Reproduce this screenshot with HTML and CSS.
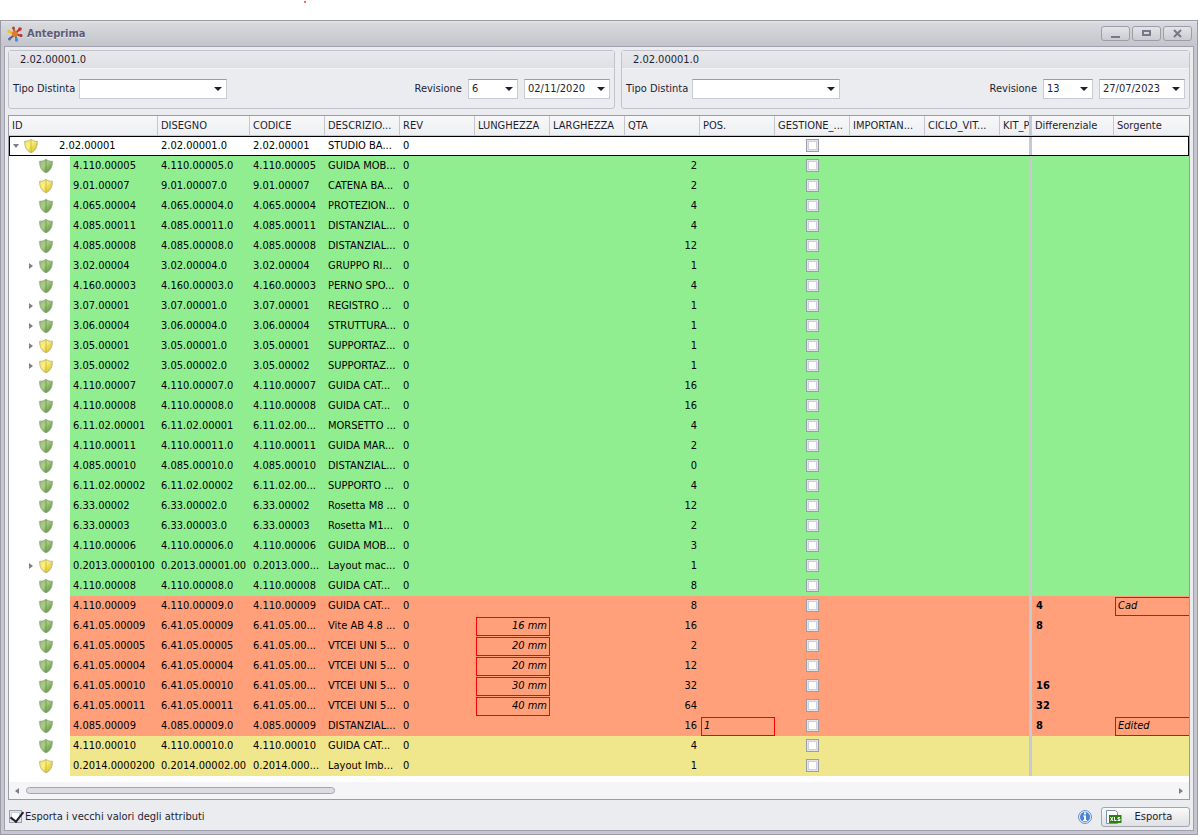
FILE: index.html
```html
<!DOCTYPE html>
<html lang="it">
<head>
    <meta charset="utf-8">
    <meta name="viewport" content="width=device-width, initial-scale=1.0">
    <link rel="stylesheet" href="styles.css">
    <title>Anteprima</title>
</head>
<body>
    <!-- shared icons -->
    <svg class="sprites" width="0" height="0" aria-hidden="true">
        <defs>
            <linearGradient id="greenFill" x1="0" x2="1" y1="0" y2="1">
                <stop offset="0" stop-color="#8fb873"/>
                <stop offset=".4" stop-color="#a9cf80"/>
                <stop offset="1" stop-color="#4f8a38"/>
            </linearGradient>
            <linearGradient id="yellowFill" x1="0" x2="1" y1="0" y2="1">
                <stop offset="0" stop-color="#f2e45c"/>
                <stop offset=".4" stop-color="#fbf17a"/>
                <stop offset="1" stop-color="#cdb41c"/>
            </linearGradient>
        </defs>
        <symbol id="shield-green" viewBox="0 0 14 14">
            <path d="M7 .3C5.500 1.600 3.200 2.600.7 2.200c-.2 5 1.400 9.500 6.300 11.600C11.900 11.700 13.500 7.200 13.300 2.200 10.800 2.600 8.500 1.600 7 .3z" fill="url(#greenFill)" stroke="#8c9c86" stroke-width=".8"/>
            <path d="M7 1v12" stroke="#557f40" stroke-width=".6"/>
        </symbol>
        <symbol id="shield-yellow" viewBox="0 0 14 14">
            <path d="M7 .3C5.500 1.600 3.200 2.600.7 2.200c-.2 5 1.400 9.500 6.300 11.600C11.900 11.700 13.500 7.200 13.300 2.200 10.800 2.600 8.500 1.600 7 .3z" fill="url(#yellowFill)" stroke="#b5aa82" stroke-width=".8"/>
            <path d="M7 1v12" stroke="#b89a20" stroke-width=".6"/>
        </symbol>
    </svg>

    <span class="mark"></span>

    <div class="window">
        <header class="titlebar">
            <svg class="logo" width="16" height="16" viewBox="0 0 16 16" aria-hidden="true">
                <g fill="none" stroke-width="2" stroke-linecap="round">
                    <path d="M8 7.500 6.500 2" stroke="#c9582a"/>
                    <path d="M8.500 7 12.500 3.500" stroke="#d42a20"/>
                    <path d="M9 8.500 14 9.500" stroke="#c93a25"/>
                    <path d="M8.500 9 9.500 14" stroke="#2f7fc4"/>
                    <path d="M7 9 3 12.500" stroke="#7a5560"/>
                    <path d="M7 7.500 2 5.500" stroke="#e8b420"/>
                </g>
                <circle cx="8" cy="8" r="3" fill="#dc7a30"/>
                <circle cx="6.500" cy="2" r="1.500" fill="#9a5a3a"/>
                <circle cx="13" cy="3" r="1.800" fill="#d42a20"/>
                <circle cx="14" cy="9.500" r="1.500" fill="#a83838"/>
                <circle cx="9.500" cy="14" r="1.700" fill="#3f93d6"/>
                <circle cx="2.500" cy="13" r="1.500" fill="#4f74a0"/>
                <circle cx="2" cy="5.500" r="1.700" fill="#edc32c"/>
            </svg>
            <h1>Anteprima</h1>
            <div class="window-buttons">
                <button type="button" aria-label="Riduci">
                    <svg width="11" height="9" viewBox="0 0 11 9"><path d="M1 7h9v2H1z" fill="#77778a"/></svg>
                </button>
                <button type="button" aria-label="Ingrandisci">
                    <svg width="11" height="9" viewBox="0 0 11 9"><path d="M2 2h7v4H2z" fill="none" stroke="#77778a" stroke-width="2"/></svg>
                </button>
                <button type="button" aria-label="Chiudi">
                    <svg width="11" height="9" viewBox="0 0 11 9"><path d="M2 1l7 7M9 1L2 8" stroke="#77778a" stroke-width="2"/></svg>
                </button>
            </div>
        </header>

        <main class="content">
            <div class="groups">
                <section class="group">
                    <h2>2.02.00001.0</h2>
                    <div class="fields">
                        <label for="tipoA" class="tipo">Tipo Distinta</label>
                        <span class="combo combo-tipo"><select id="tipoA"><option></option></select></span>
                        <label for="revA" class="push">Revisione</label>
                        <span class="combo combo-rev"><select id="revA"><option>6</option></select></span>
                        <span class="combo combo-date"><select aria-label="Data revisione"><option>02/11/2020</option></select></span>
                    </div>
                </section>
                <section class="group">
                    <h2>2.02.00001.0</h2>
                    <div class="fields">
                        <label for="tipoB" class="tipo">Tipo Distinta</label>
                        <span class="combo combo-tipo"><select id="tipoB"><option></option></select></span>
                        <label for="revB" class="push">Revisione</label>
                        <span class="combo combo-rev"><select id="revB"><option>13</option></select></span>
                        <span class="combo combo-date"><select aria-label="Data revisione"><option>27/07/2023</option></select></span>
                    </div>
                </section>
            </div>

            <div class="grid">
                <table>
                    <colgroup>
                        <col class="c-id"><col class="c-disegno">
                        <col class="c-std"><col class="c-std"><col class="c-std"><col class="c-std"><col class="c-std"><col class="c-std">
                        <col class="c-std"><col class="c-std"><col class="c-std"><col class="c-std"><col class="c-kit"><col class="c-diff"><col>
                    </colgroup>
                    <thead>
                        <tr>
                            <th>ID</th><th>DISEGNO</th><th>CODICE</th><th>DESCRIZIO...</th><th>REV</th>
                            <th>LUNGHEZZA</th><th>LARGHEZZA</th><th>QTA</th><th>POS.</th><th>GESTIONE_...</th>
                            <th>IMPORTAN...</th><th>CICLO_VIT...</th><th class="last-scroll">KIT_P</th>
                            <th class="pinned">Differenziale</th><th>Sorgente</th>
                        </tr>
                    </thead>
                    <tbody id="rows"></tbody>
                </table>
                <div class="scrollbar">
                    <span class="arrow arrow-left"></span>
                    <div class="track"><div class="thumb"></div></div>
                    <span class="arrow arrow-right"></span>
                </div>
            </div>

            <footer>
                <label class="export-old">
                    <input type="checkbox" class="tick" checked>
                    Esporta i vecchi valori degli attributi
                </label>
                <svg class="info" width="14" height="14" viewBox="0 0 14 14" role="img" aria-label="Informazioni">
                    <circle cx="7" cy="7" r="6.500" fill="#dde9f8" stroke="#6d8fc4"/>
                    <circle cx="7" cy="7" r="5" fill="#4a83cf"/>
                    <path d="M6 2.500h2v2H6zM5 5.500h3v4.500h1v1H5v-1h1V6.500H5z" fill="#fff"/>
                </svg>
                <button type="button" class="export">
                    <svg width="16" height="16" viewBox="0 0 16 16" aria-hidden="true">
                        <path d="M.5 1.500h9l2 2v11H.5z" fill="#fff" stroke="#7d8fb3"/>
                        <path d="M3 6h12.500v8H3z" fill="#2f7d14"/>
                        <path d="M4.500 8l2.500 4M7 8l-2.500 4M8.500 8v3.500h2M14 8.500h-2v1.500h2v1.500h-2.500" fill="none" stroke="#fff"/>
                    </svg>
                    <span>Esporta</span>
                </button>
            </footer>
        </main>
    </div>

    <script src="rows.js"></script>
</body>
</html>
```
FILE: styles.css
```css
* {
    box-sizing: border-box;
}

body {
    margin: 0;
    padding-top: 20px;
    min-height: 100vh;
    display: flex;
    flex-direction: column;
    background: #fff;
    color: #1e1e32;
    font-family: "DejaVu Sans Condensed", "Noto Sans", sans-serif;
    font-size: 11px;
    line-height: 14px;
}

.sprites {
    position: absolute;
}

.mark {
    position: absolute;
    top: 1px;
    left: 304px;
    width: 2px;
    height: 2px;
    border-radius: 1px;
    background: #f33;
}

button, select {
    font: inherit;
    color: inherit;
}

/* window frame */
.window {
    flex: 1;
    display: flex;
    flex-direction: column;
    border: 1px solid #9b9ba8;
    background: #c6c6ce;
    padding: 0 3px 3px;
}

.titlebar {
    display: flex;
    align-items: center;
    height: 25px;
    margin: 0 -3px;
    padding: 0 5px 0 6px;
    background: linear-gradient(#e4e5e9, #d8d9dd 10%, #c4c5ca);
}

.titlebar h1 {
    margin: 0 0 0 4px;
    font-size: 11px;
    font-weight: bold;
    color: #5c5c76;
    text-shadow: 0 1px 0 #ececf0;
}

.window-buttons {
    display: flex;
    gap: 2px;
    margin-left: auto;
}

.window-buttons button {
    display: flex;
    align-items: center;
    justify-content: center;
    width: 29px;
    height: 15px;
    padding: 0;
    border: 1px solid #9d9da9;
    border-radius: 3px;
    background: linear-gradient(#e3e4e8, #cbccd2);
}

.content {
    flex: 1;
    display: flex;
    flex-direction: column;
    border: 1px solid #a0a0ac;
    background: #ebecef;
    padding: 3px 3px 2px;
}

/* the two revisions being compared */
.groups {
    display: grid;
    grid-template-columns: 16fr 15fr;
    gap: 6px;
    margin-bottom: 6px;
}

.group {
    border: 1px solid #c2c3ca;
    border-radius: 3px;
    height: 59px;
}

.group h2 {
    margin: 0;
    height: 18px;
    padding: 0 11px;
    font-size: 11px;
    font-weight: normal;
    line-height: 18px;
    background: linear-gradient(#e8e9ec, #dfe0e4);
    border-bottom: 1px solid #f4f4f6;
}

.fields {
    display: flex;
    align-items: center;
    gap: 6px;
    padding: 10px 4px 0;
}

.tipo {
    width: 60px;
    white-space: nowrap;
}

.push {
    margin-left: auto;
}

.combo {
    position: relative;
    height: 20px;
}

.combo select {
    appearance: none;
    display: block;
    width: 100%;
    height: 20px;
    padding: 0 0 0 3px;
    border: 1px solid #c9cad2;
    border-top-color: #9b9ba8;
    border-radius: 0;
    background: #fff;
}

.combo::after {
    content: "";
    position: absolute;
    right: 5px;
    top: 8px;
    border: 4px solid transparent;
    border-top-color: #1e1e32;
    border-bottom: 0;
}

.combo-tipo {
    width: 148px;
}

.combo-rev {
    width: 50px;
}

.combo-date {
    width: 86px;
}

/* tree grid */
.grid {
    flex: 1;
    display: flex;
    flex-direction: column;
    border: 1px solid #9b9ba8;
    background: #fff;
}

table {
    width: 100%;
    table-layout: fixed;
    border-collapse: separate;
    border-spacing: 0;
}

.c-id { width: 149px; }
.c-disegno { width: 92px; }
.c-std { width: 75px; }
.c-kit { width: 29px; }
.c-diff { width: 85px; }

th {
    height: 20px;
    padding: 0 0 0 3px;
    border-right: 1px solid #c6c6ce;
    border-bottom: 1px solid #c6c6ce;
    background: linear-gradient(#f8f8fa, #eeeff2);
    font-weight: normal;
    text-align: left;
    white-space: nowrap;
    overflow: hidden;
}

th:last-child, th.last-scroll {
    border-right: 0;
}

td {
    height: 20px;
    padding: 0 0 0 3px;
    color: #000;
    white-space: nowrap;
    overflow: hidden;
}

th.pinned, td.pinned {
    padding-left: 6px;
    box-shadow: inset 3px 0 #c8c8d0;
}

td.pinned {
    padding-left: 7px;
    font-weight: bold;
}

td.num {
    padding-right: 3px;
    text-align: right;
}

td.flag {
    padding: 3px 0 4px;
}

.equal { background: #90ee90; }
.different { background: #ffa07a; }
.removed { background: #f0e68c; }

.root td {
    box-shadow: inset 0 1px #000, inset 0 -1px #000;
}

.root td:first-child {
    box-shadow: inset 0 1px #000, inset 0 -1px #000, inset 1px 0 #000;
}

.root td:last-child {
    box-shadow: inset 0 1px #000, inset 0 -1px #000, inset -1px 0 #000;
}

.root td.pinned {
    box-shadow: inset 0 1px #000, inset 0 -1px #000, inset 3px 0 #c8c8d0;
}

td.id {
    padding: 0;
}

.node {
    display: flex;
    align-items: center;
    height: 20px;
}

.branch {
    display: flex;
    align-items: center;
    gap: 5px;
    width: 61px;
    height: 20px;
    padding-left: 20px;
    margin-right: 3px;
    background: #fff;
}

.root .branch {
    width: 47px;
    padding-left: 4px;
    background: none;
}

.expander {
    width: 5px;
    border: 3px solid transparent;
    border-left: 4px solid #7d7d8c;
    border-right: 0;
}

.expander.open {
    width: 6px;
    border: 3px solid transparent;
    border-top: 4px solid #7d7d8c;
    border-bottom: 0;
}

.expander.none {
    visibility: hidden;
}

td.changed {
    padding: 1px 0 0 1px;
}

td.changed span {
    display: block;
    height: 19px;
    padding: 0 2px;
    border: 1px solid #f00;
    font-style: italic;
    line-height: 16px;
}

td.changed.mm span {
    text-align: right;
}

td.changed.edge span {
    border-right: 0;
}

input[type="checkbox"] {
    appearance: none;
    display: block;
    width: 13px;
    height: 13px;
    margin: 0 auto;
    border: 1px solid #9a9daa;
    background: #fff;
    box-shadow: inset 0 0 0 1px #e2e4e9, inset 0 0 0 2px #cfd0d8;
}

.scrollbar {
    display: flex;
    align-items: center;
    gap: 7px;
    height: 17px;
    margin-top: auto;
    padding: 0 6px;
    background: #f5f5f7;
}

.track {
    flex: 1;
}

.thumb {
    width: 27%;
    height: 7px;
    border: 1px solid #a3a4af;
    border-radius: 4px;
    background: #dcdde2;
}

.arrow {
    border: 3px solid transparent;
}

.arrow-left {
    border-right: 4px solid #7d7d8c;
    border-left: 0;
}

.arrow-right {
    border-left: 4px solid #7d7d8c;
    border-right: 0;
}

/* bottom bar */
footer {
    display: flex;
    align-items: center;
    height: 28px;
    padding-top: 5px;
}

.export-old {
    display: flex;
    align-items: center;
    gap: 3px;
    padding-left: 1px;
}

.tick {
    position: relative;
}

.tick:checked::after {
    content: "";
    position: absolute;
    left: 3px;
    top: -2px;
    width: 6px;
    height: 11px;
    border: solid #20202e;
    border-width: 0 2px 2px 0;
    transform: rotate(38deg);
}

.info {
    margin-left: auto;
    margin-right: 9px;
}

.export {
    display: flex;
    align-items: center;
    width: 89px;
    height: 20px;
    padding: 0 4px;
    border: 1px solid #a3a4af;
    border-radius: 3px;
    background: linear-gradient(#fafafb, #dfe0e5);
}

.export span {
    flex: 1;
    text-align: center;
}
```
FILE: rows.js
```js
// state, shield, expander, id, disegno, codice, descrizione, qta, extra
var data = [
    ['root', 'yellow', 'open', '2.02.00001', '2.02.00001.0', '2.02.00001', 'STUDIO BA...', ''],
    ['equal', 'green', 'none', '4.110.00005', '4.110.00005.0', '4.110.00005', 'GUIDA MOB...', 2],
    ['equal', 'yellow', 'none', '9.01.00007', '9.01.00007.0', '9.01.00007', 'CATENA BA...', 2],
    ['equal', 'green', 'none', '4.065.00004', '4.065.00004.0', '4.065.00004', 'PROTEZION...', 4],
    ['equal', 'green', 'none', '4.085.00011', '4.085.00011.0', '4.085.00011', 'DISTANZIAL...', 4],
    ['equal', 'green', 'none', '4.085.00008', '4.085.00008.0', '4.085.00008', 'DISTANZIAL...', 12],
    ['equal', 'green', 'closed', '3.02.00004', '3.02.00004.0', '3.02.00004', 'GRUPPO RI...', 1],
    ['equal', 'green', 'none', '4.160.00003', '4.160.00003.0', '4.160.00003', 'PERNO SPO...', 4],
    ['equal', 'green', 'closed', '3.07.00001', '3.07.00001.0', '3.07.00001', 'REGISTRO ...', 1],
    ['equal', 'green', 'closed', '3.06.00004', '3.06.00004.0', '3.06.00004', 'STRUTTURA...', 1],
    ['equal', 'yellow', 'closed', '3.05.00001', '3.05.00001.0', '3.05.00001', 'SUPPORTAZ...', 1],
    ['equal', 'yellow', 'closed', '3.05.00002', '3.05.00002.0', '3.05.00002', 'SUPPORTAZ...', 1],
    ['equal', 'green', 'none', '4.110.00007', '4.110.00007.0', '4.110.00007', 'GUIDA CAT...', 16],
    ['equal', 'green', 'none', '4.110.00008', '4.110.00008.0', '4.110.00008', 'GUIDA CAT...', 16],
    ['equal', 'green', 'none', '6.11.02.00001', '6.11.02.00001', '6.11.02.00...', 'MORSETTO ...', 4],
    ['equal', 'green', 'none', '4.110.00011', '4.110.00011.0', '4.110.00011', 'GUIDA MAR...', 2],
    ['equal', 'green', 'none', '4.085.00010', '4.085.00010.0', '4.085.00010', 'DISTANZIAL...', 0],
    ['equal', 'green', 'none', '6.11.02.00002', '6.11.02.00002', '6.11.02.00...', 'SUPPORTO ...', 4],
    ['equal', 'green', 'none', '6.33.00002', '6.33.00002.0', '6.33.00002', 'Rosetta M8 ...', 12],
    ['equal', 'green', 'none', '6.33.00003', '6.33.00003.0', '6.33.00003', 'Rosetta M1...', 2],
    ['equal', 'green', 'none', '4.110.00006', '4.110.00006.0', '4.110.00006', 'GUIDA MOB...', 3],
    ['equal', 'yellow', 'closed', '0.2013.0000100', '0.2013.00001.00', '0.2013.000...', 'Layout mac...', 1],
    ['equal', 'green', 'none', '4.110.00008', '4.110.00008.0', '4.110.00008', 'GUIDA CAT...', 8],
    ['different', 'green', 'none', '4.110.00009', '4.110.00009.0', '4.110.00009', 'GUIDA CAT...', 8, { diff: 4, source: 'Cad' }],
    ['different', 'green', 'none', '6.41.05.00009', '6.41.05.00009', '6.41.05.00...', 'Vite AB 4.8 ...', 16, { length: '16 mm', diff: 8 }],
    ['different', 'green', 'none', '6.41.05.00005', '6.41.05.00005', '6.41.05.00...', 'VTCEI UNI 5...', 2, { length: '20 mm' }],
    ['different', 'green', 'none', '6.41.05.00004', '6.41.05.00004', '6.41.05.00...', 'VTCEI UNI 5...', 12, { length: '20 mm' }],
    ['different', 'green', 'none', '6.41.05.00010', '6.41.05.00010', '6.41.05.00...', 'VTCEI UNI 5...', 32, { length: '30 mm', diff: 16 }],
    ['different', 'green', 'none', '6.41.05.00011', '6.41.05.00011', '6.41.05.00...', 'VTCEI UNI 5...', 64, { length: '40 mm', diff: 32 }],
    ['different', 'green', 'none', '4.085.00009', '4.085.00009.0', '4.085.00009', 'DISTANZIAL...', 16, { pos: '1', diff: 8, source: 'Edited' }],
    ['removed', 'green', 'none', '4.110.00010', '4.110.00010.0', '4.110.00010', 'GUIDA CAT...', 4],
    ['removed', 'yellow', 'none', '0.2014.0000200', '0.2014.00002.00', '0.2014.000...', 'Layout Imb...', 1]
];

function changed(value, cls) {
    return value ? `<td class="changed ${cls}"><span>${value}</span></td>` : '<td></td>';
}

document.getElementById('rows').innerHTML = data.map(function(row) {
    let [state, shield, expander, id, disegno, codice, descrizione, qta, extra] = row;
    extra = extra || {};
    return `<tr class="${state}">
        <td class="id"><div class="node">
            <span class="branch"><i class="expander ${expander}"></i><svg width="14" height="14"><use href="#shield-${shield}"/></svg></span>
            <span>${id}</span>
        </div></td>
        <td>${disegno}</td><td>${codice}</td><td>${descrizione}</td><td>0</td>
        ${changed(extra.length, 'mm')}
        <td></td>
        <td class="num">${qta}</td>
        ${changed(extra.pos, '')}
        <td class="flag"><input type="checkbox" aria-label="Gestione ${id}"></td>
        <td></td><td></td><td></td>
        <td class="pinned">${extra.diff || ''}</td>
        ${changed(extra.source, 'edge')}
    </tr>`;
}).join('');
```
